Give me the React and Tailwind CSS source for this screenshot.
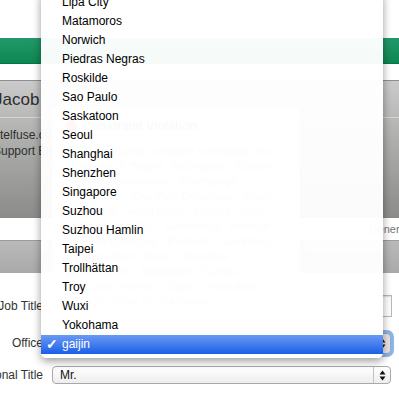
const offices = [
  "Lipa City",
  "Matamoros",
  "Norwich",
  "Piedras Negras",
  "Roskilde",
  "Sao Paulo",
  "Saskatoon",
  "Seoul",
  "Shanghai",
  "Shenzhen",
  "Singapore",
  "Suzhou",
  "Suzhou Hamlin",
  "Taipei",
  "Trollhättan",
  "Troy",
  "Wuxi",
  "Yokohama",
];

const violationLines = [
  "The following constraint is violated: must",
  "be one of 'Batam', 'Bellingham', 'Boston',",
  "'Brno', 'Brownsville', 'Champaign',",
  "'Chicago', 'Chu-Pei', 'Dongguan', 'Essen',",
  "'Gaeser', 'Hong Kong', 'Kaunas', 'Lake",
  "Mills', 'Lipa City', 'Matamoros', 'Norwich',",
  "'Piedras Negras', 'Roskilde', 'Sao Paulo',",
  "'Saskatoon', 'Seoul', 'Shanghai',",
  "'Shenzhen', 'Singapore', 'Suzhou',",
  "'Suzhou Hamlin', 'Taipei', 'Trollhättan',",
  "'Troy', 'Wuxi' or 'Yokohama'.",
];

function Arrows() {
  return (
    <svg width="7" height="11" viewBox="0 0 7 11">
      <path d="M3.5 0.5 L6.5 4.5 L0.5 4.5 Z" fill="#111" />
      <path d="M3.5 10.5 L6.5 6.5 L0.5 6.5 Z" fill="#111" />
    </svg>
  );
}

function Label({ children }) {
  return (
    <div className="w-[43px] shrink-0 flex justify-end whitespace-nowrap">
      <span>{children}</span>
    </div>
  );
}

export default function App() {
  return (
    <div
      className="relative w-[399px] h-[397px] overflow-hidden bg-white text-[#222]"
      style={{ fontFamily: '"Liberation Sans", Arial, sans-serif' }}
    >
      {/* page behind the menu */}
      <div className="h-[38px] bg-white" />
      <div className="h-[26px] bg-gradient-to-b from-[#23996b] to-[#0c8753] border-b border-[#0a7447]" />
      <div className="h-[16px] bg-white" />

      <div className="h-[138px] bg-gradient-to-b from-[#cacaca] to-[#8b8b89] border-t border-[#8f8f8f]">
        <div className="pt-[8px] ml-[-6px] text-[17px] leading-[22px] text-[#2e2e2e]">Jacob</div>
        <div className="mt-[6px] h-px bg-[#d6d6d6]" />
        <div className="mt-[9px] text-[12px] leading-[16px] text-[#2e2e2e] whitespace-nowrap">telfuse.com</div>
        <div className="ml-[-7px] text-[12px] leading-[16px] text-[#2e2e2e] whitespace-nowrap">Support Engineer</div>
      </div>

      <div className="h-[22px] bg-white pl-[369px] text-[11px] leading-[22px] text-[#777] whitespace-nowrap overflow-hidden">
        Gener<span className="text-[#e0890c]">al</span>
      </div>
      <div className="h-[33px] bg-gradient-to-b from-[#b9b9b9] to-[#a9a9a9] border-t border-[#9c9c9c]" />

      <div className="flex flex-col pt-[22px] text-[12px] text-[#333]">
        <div className="flex items-center h-[22px]">
          <Label>Job Title</Label>
          <div className="ml-[9px] mr-[7px] flex-1 h-[22px] bg-white border border-[#b8b8b8] shadow-[inset_0_1px_1px_rgba(0,0,0,0.12)]" />
        </div>
        <div className="flex items-center h-[22px] mt-[15px]">
          <Label>Office</Label>
          <div className="ml-[9px] mr-[8px] flex-1 h-[21px] flex items-center justify-end pr-[4px] rounded-[4px] bg-[#efe2e0] border border-[#8aa9d4] ring-[3px] ring-[#8db5ea]">
            <Arrows />
          </div>
        </div>
        <div className="flex items-center h-[18px] mt-[12px]">
          <Label>Personal Title</Label>
          <div className="ml-[9px] mr-[8px] flex-1 h-[18px] flex items-center rounded-[4px] border border-[#a9a9a9] bg-gradient-to-b from-white to-[#ededed]">
            <span className="flex-1 pl-[7px] text-[#111]">Mr.</span>
            <span className="h-full w-[17px] border-l border-[#c2c2c2] flex items-center justify-center">
              <Arrows />
            </span>
          </div>
        </div>
      </div>

      {/* constraint violation popover */}
      <div className="absolute left-[52px] top-[106px] w-[248px] h-[208px] rounded-[6px] bg-[#fffff6] border border-[#e4e4e4] shadow-[0_2px_6px_rgba(0,0,0,0.12)] pt-[10px] pl-[12px]">
        <div className="flex items-center gap-[6px] text-[12px] font-bold text-[#666]">
          <span className="w-[12px] h-[12px] rounded-full bg-[#d9332b]" />
          Constraint Violation
        </div>
        <div className="mt-[9px] pl-[14px] text-[11px] leading-[15px] text-[#999] whitespace-nowrap">
          {violationLines.map((line) => (
            <div key={line}>{line}</div>
          ))}
        </div>
      </div>

      {/* native popup menu */}
      <div className="absolute left-[41px] top-[-7px] w-[342px] pb-[4px] bg-white/[0.965] rounded-b-[5px] shadow-[0_3px_9px_rgba(0,0,0,0.4)] text-[12px] text-black">
        {offices.map((name) => (
          <div key={name} className="h-[19px] leading-[19px] pl-[21px] whitespace-nowrap">
            {name}
          </div>
        ))}
        <div className="relative h-[19px] leading-[19px] pl-[21px] text-white bg-gradient-to-b from-[#6a99f3] to-[#185ee7]">
          <span className="absolute left-[5px] top-0 text-[14px] font-bold">✓</span>
          gaijin
        </div>
      </div>
    </div>
  );
}
